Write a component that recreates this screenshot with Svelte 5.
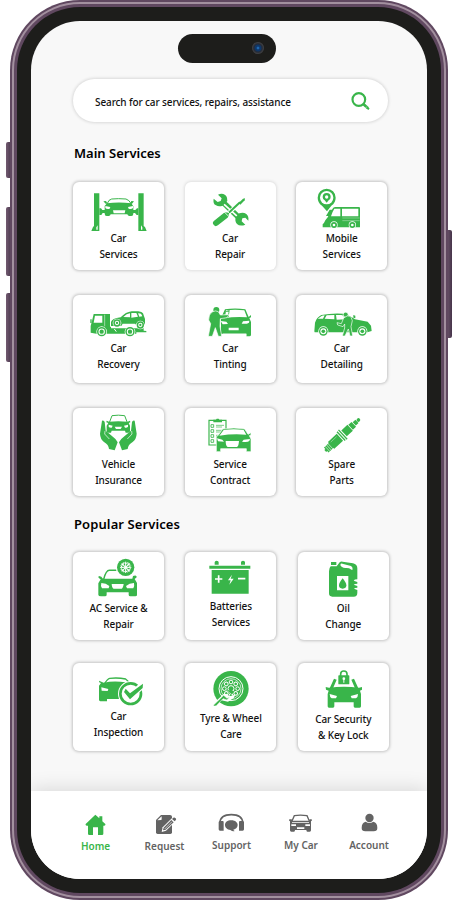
<script>
  const navLabels = ['Home', 'Request', 'Support', 'My Car', 'Account'];
</script>

{#snippet carLift()}
  <path d="M87 54h16v113H79l5-12 3-3zM220 54h16v98l4 3 5 12h-25z" />
  <path d="M94 163v-7l4-6v13zM228 163v-13l4 6v7z" fill="#fff" />
  <path d="M103 99h5l4 5h10v9h-9l-4 6h-6zM220 99h-4l-5 5h-9v9h8l5 6h5z" />
  <path d="M126 86q5-14 14-15 20-2 43 0 9 2 16 15" fill="none" stroke="#39b54a" stroke-width="3" />
  <path d="M115 78l8-1 4 7-5 1zM207 78l-8-1-3 7 5 1zM126 84q35-5 73 0l6 9v22q0 7-6 7h-7q-4-1-5-5h-50q-1 5-6 5h-6q-6 0-6-7V92z" />
  <path d="M121 92l15 3-2 5q-9 2-13-2zM204 92l-15 3 2 5q9 2 13-2zM144 105h37l-2 9h-33z" fill="#fff" />
{/snippet}

{#snippet tools()}
  <path d="M470 78L525 131" stroke="#39b54a" stroke-width="17" />
  <path d="M473 84l47 43" stroke="#fff" stroke-width="5" />
  <path d="M458 58l11 11-3 8-9 3-12-10q-3 15 7 20 8 5 20 1l14-14q1-17-12-21-8-2-16 2zM540 148l-11-10 2-9 9-2 9 9q2-13-6-20-9-6-21-2l-10 10q-5 13 3 22 9 8 25 2z" />
  <path d="M484 118L533 74" stroke="#fff" stroke-width="12" />
  <path d="M484 118L524 81" stroke="#39b54a" stroke-width="6" />
  <path d="M520 83l13-13 6-1-1 6-13 13z" />
  <path d="M452 143l29-23" stroke="#39b54a" stroke-width="18" stroke-linecap="round" />
  <path d="M477 110l18 18M483 105l16 16" stroke="#fff" stroke-width="2.5" />
{/snippet}

{#snippet van()}
  <path d="M306 40a27 27 0 0 0-27 27q0 15 13 24l15 17 13-17q13-9 13-24a27 27 0 0 0-27-27z" />
  <circle cx="306" cy="67" r="20" fill="#fff" />
  <path d="M306 53a12 12 0 0 0-12 12q0 7 6 10l6 7 6-7q6-3 6-10a12 12 0 0 0-12-12z" />
  <circle cx="306" cy="65" r="5" fill="#fff" />
  <path d="M322 103q3-8 9-8h72q3 0 3 4v57H294v-9q5-4 8-12 8-7 13-22z" />
  <path d="M329 100h18v23h-28q4-14 10-23zM352 100h49v23h-49z" fill="#fff" />
  <path d="M315 103h8l-9 19h-10z" fill="#39b54a" />
  <path d="M353 128h52M353 136h52" stroke="#fff" stroke-width="1.5" opacity=".7" />
  <circle cx="328" cy="149" r="11" fill="#fff" /><circle cx="383" cy="149" r="11" fill="#fff" />
  <circle cx="328" cy="149" r="9" /><circle cx="383" cy="149" r="9" />
  <circle cx="328" cy="149" r="4" fill="#fff" /><circle cx="383" cy="149" r="4" fill="#fff" />
{/snippet}

{#snippet towTruck()}
  <path d="M86 80h34v38h18v5h98v7l8 1v4h-30v4H94l-17-3v-20l4-15z" />
  <path d="M90 85h22v21H86z" fill="#fff" />
  <path d="M76 96h4v11h-4z" />
  <path d="M119 80h16v39h-16z" />
  <path d="M119 82v35" stroke="#fff" stroke-width="1.5" />
  <path d="M138 117h101v4H138z" fill="#fff" />
  <path d="M138 104q2-10 29-14 15-16 33-18h20q11 1 14 6l6 17v15l-5 5-20-1-5-5h-37l-4 7h-31z" />
  <path d="M175 89q10-10 20-11v12zM199 77h15l5 11-20 3zM219 78q9 0 10 3l3 6-9 1z" fill="#fff" />
  <path d="M148 125l6 8" stroke="#fff" stroke-width="3" />
  {#each [[156, 107, 11], [226, 113, 11], [110, 133, 14], [195, 133, 14]] as [x, y, r]}
    <circle cx={x} cy={y} r={r + 2} fill="#fff" />
    <circle cx={x} cy={y} {r} />
    <circle cx={x} cy={y} r={r - 4.5} fill="#fff" />
    <circle cx={x} cy={y} r={r - 7.5} />
  {/each}
{/snippet}

{#snippet tinting()}
  <path d="M467 92l12-26q30-5 61 0l10 23 7-6v7l-5 2 5 12v38q0 5-5 5h-9v-8h-76v-42z" />
  <path d="M482 69q27-4 55 0l8 21q-33-3-70 3z" fill="#fff" />
  <path d="M480 72l13-4-3 21-12 2z" />
  <path d="M482 73h8l-2 11-9 3z" fill="#fff" />
  <path d="M552 100l-19 2-4 7q15 2 22-3zM490 121h30v8h-30zM466 101l17 2 5 7-16 1z" fill="#fff" />
  <path d="M473 139h70v8h-70z" fill="#fff" />
  <circle cx="453" cy="68" r="11" fill="#fff" /><circle cx="453" cy="68" r="9" />
  <path d="M440 74q-10 7-10 24l6 11-7 38h12l9-26 9 26h10l-5-30 1-23 20-3 6-9-26 1-6-10q-8-5-19 1z" stroke="#fff" stroke-width="2" />
{/snippet}

{#snippet detailing()}
  <path d="M269 132l2-26q4-15 19-23 30-6 64-4 18 3 37 17l38 7 10 12 2 16-13 4H270z" />
  <path d="M279 94l13-9 8-1-5 10zM300 94l6-10 23-1v13zM334 83h16q15 3 25 12l-39 2z" fill="#fff" />
  <path d="M386 91v-8l6 2v8z" />
  <circle cx="363" cy="82" r="7.500" stroke="#fff" stroke-width="2" />
  <path d="M357 92l-7 17-13-3 2 7 16 5 5-8v12l-7 24h8l10-21 5 21h8l-5-28 4-18-5-13q-10-5-21 5z" stroke="#fff" stroke-width="2" />
  {#each [296, 413] as x}
    <circle cx={x} cy="132" r="15" fill="#fff" /><circle cx={x} cy="132" r="13" />
    <circle cx={x} cy="132" r="9" fill="#fff" /><circle cx={x} cy="132" r="5.500" />
  {/each}
{/snippet}

{#snippet hand()}
  <path d="M111 61q6-2 8 4l3 26 18 15q13 9 18 20l-9 24-17-4q-1-13-15-21-11-8-12-25z" />
  <path d="M120 92l-1 9 14 15" fill="none" stroke="#fff" stroke-width="2" />
{/snippet}

{#snippet insurance()}
  {@render hand()}
  <g transform="translate(320 0) scale(-1 1)">{@render hand()}</g>
  <path d="M133 67l8-21q19-3 38 0l8 21" fill="none" stroke="#39b54a" stroke-width="3" />
  <path d="M132 64q28-3 56 0l7-3 1 5-5 2 4 8v17q0 4-5 4h-8l-2-6h-40l-2 6h-8q-5 0-5-4V76l5-8-6-2 1-5z" />
  <path d="M131 73l12 3-3 6q-6 1-9-3zM189 73l-12 3 3 6q6 1 9-3zM149 79h22l-4 7h-14z" fill="#fff" />
{/snippet}

{#snippet contract()}
  <path d="M431 60h51v74h-51z" fill="#fff" stroke="#39b54a" stroke-width="3.500" />
  <path d="M444 58h8l2-3h6l2 3h8v8h-26z" />
  {#each [73, 88, 103, 118] as y}
    <path d="M437 {y}h8v8h-8z" fill="none" stroke="#39b54a" stroke-width="2.500" />
    <path d="M452 {y + 2}h24m-24 5h18" stroke="#39b54a" stroke-width="2" />
  {/each}
  <path d="M458 106l14-20q34-6 66 0l10 16 9-5v7l-5 2 5 10v38h-14v-9h-77v9h-13v-46z" stroke="#fff" stroke-width="2" />
  <path d="M475 89q30-5 60 0l8 14q-39-4-81 3z" fill="#fff" />
  <path d="M455 114l16 4 5 6-18-1zM554 116l-19 2-5 6q17 2 22-2zM481 122h40q-1 16-6 18h-28q-6-3-6-18z" fill="#fff" />
{/snippet}

{#snippet sparkPlug()}
  <g transform="translate(353 104) rotate(-43)">
    <path d="M-70-4h4v-6h20v-4h36v28h-36v4-8h-20v-6h-4zM-7-18h4v36h-4zM0-19h4v38H0zM7-12h25v24H7zM34-10h13v20H34zM49-7h11v14H49z" />
    <circle cx="66" cy="0" r="5.500" />
    <path d="M-61-11v22M-55-11v22M-49-11v22" stroke="#fff" stroke-width="1.700" />
    <path d="M-40-8h24" stroke="#fff" stroke-width="1" />
  </g>
{/snippet}

{#snippet acCar()}
  <path d="M116 104q7-27 17-27h23" fill="none" stroke="#39b54a" stroke-width="4.500" />
  <path d="M102 94q8 0 12 8h88l2-8q12-4 11 4l-6 5 7 12v36q0 4-5 4h-15q-5 0-5-5v-7h-66v7q0 5-5 5h-12q-8 0-8-5v-34l7-12-6-4q-2-5 1-6z" />
  <path d="M109 115q14 0 24 9l-2 7h-20q-5-7-2-16zM207 115q-14 0-24 9l3 7h19q4-7 2-16zM140 118h36q-2 13-6 14h-24q-5-1-6-14z" fill="#fff" />
  <circle cx="182" cy="68" r="30" fill="#fff" /><circle cx="182" cy="68" r="26" />
  {#each [0, 45, 90, 135] as a}
    <path transform="rotate({a} 182 68)" d="M182 51v34m-5-32l5 5 5-5m-10 30l5-5 5 5" fill="none" stroke="#fff" stroke-width="3" />
  {/each}
{/snippet}

{#snippet battery()}
  <path d="M450 60v-7q0-5 6-5t6 5v7zM529 60v-7q0-5 6-5t6 5v7zM434 63h123v9H434zM441 76h111v71H441z" />
  <path d="M451 103h22m-11-11v22M520 102h22" stroke="#fff" stroke-width="5" />
  <path d="M502 90l-12 17h8l-4 13 13-18h-9z" fill="#fff" />
{/snippet}

{#snippet oilCan()}
  <path d="M316 52h16v9h-16zM315 65h18l9-12q3-3 9-2l31 5q13 3 13 15v33q-9 0-11 4l11 4v5q-8 0-11 3l11 4v5q-8 0-10 3l10 4v8q0 12-11 12h-64q-10 0-10-10V80q0-10 5-15z" />
  <path d="M344 61q1-5 6-4l26 7q5 3 5 10-1 3-6 0-4-5-16-4-12-1-15-9zM334 94h34v43h-34z" fill="#fff" />
  <path d="M351 101q-11 13-11 21a11 10 0 0 0 22 0q0-8-11-21z" />
{/snippet}

{#snippet inspection()}
  <path d="M117 417q11-17 17-18 25-3 48 2l12 11" fill="none" stroke="#39b54a" stroke-width="4" />
  <path d="M102 406l14 6q30-6 66-1v50h-56v7h-20q-4-1-4-5v-42l6-8q-6 0-6-5z" />
  <path d="M109 426l21 5-2 6-18-1z" fill="#fff" />
  <circle cx="197" cy="445" r="38" fill="#fff" />
  <circle cx="197" cy="445" r="31" fill="#fff" stroke="#39b54a" stroke-width="8" />
  <path d="M185 442l10 12 40-37" fill="none" stroke="#fff" stroke-width="20" />
  <path d="M182 430l13 14 39-29-1 13-38 34-18-22z" />
{/snippet}

{#snippet tyre()}
  <circle cx="499" cy="430" r="53" />
  <circle cx="499" cy="430" r="36" fill="none" stroke="#fff" stroke-width="3" />
  <circle cx="499" cy="430" r="30" fill="none" stroke="#fff" stroke-width="2" />
  {#each [0, 45, 90, 135, 180, 225, 270, 315] as a}
    <circle transform="rotate({a} 499 430)" cx="499" cy="410" r="5.500" fill="none" stroke="#fff" stroke-width="3" />
  {/each}
  <circle cx="499" cy="430" r="9" fill="none" stroke="#fff" stroke-width="3" />
  <path d="M442 478l35-32 8-1 9 8 18-5-5 10-17 11-20-4-20 18z" fill="#fff" />
  <path d="M446 480l31-30 10 9 8-4-8 9-12-4-20 21q-7 3-9-1zM484 433l16 14 7-2 2-7" stroke="#fff" stroke-width="1.500" />
{/snippet}

{#snippet security()}
  <path d="M312 429l13-29 8 3-11 26zM398 429l-13-29-8 3 11 26z" />
  <path d="M300 425l10 2q45-5 90 0l9-2v8l-6 3 3 10v37q0 4-4 4h-14q-4 0-4-4v-12h-58v12q0 4-4 4h-12q-4 0-4-4v-37l3-10-8-3z" />
  <path d="M312 446l22 6-3 7h-13q-6-3-6-13zM397 446l-22 6 3 7h13q6-3 6-13z" fill="#fff" />
  <path d="M345 393v-7q0-9 9.500-9t9.500 9v7" fill="none" stroke="#39b54a" stroke-width="5" />
  <rect x="338" y="390" width="33" height="27" rx="2" />
  <circle cx="354.500" cy="400" r="4" fill="#fff" /><path d="M353 401h3v11h-3z" fill="#fff" />
{/snippet}

{#snippet card(icon, origin, gap, first, second, light = false)}
  <div class="card" class:light>
    <svg viewBox="{origin} 270 132" width="90" height="44">{@render icon()}</svg>
    <div class="label" style:margin-top="{gap}px">{first}<br />{second}</div>
  </div>
{/snippet}

<div class="stage">
  <i class="key k1"></i><i class="key k2"></i><i class="key k3"></i><i class="key k4"></i>
  <div class="phone">
    <div class="metal">
      <div class="rim">
        <div class="bezel">
          <div class="screen">
            <div class="island"><span class="lens"></span></div>
            <main>
              <div class="search">
                <span>Search for car services, repairs, assistance</span>
                <svg viewBox="365 270 57 60" width="19" height="20">
                  <circle cx="388.500" cy="295.500" r="19" fill="none" stroke="#39b54a" stroke-width="6.500" />
                  <path d="M401 308l15 14" stroke="#39b54a" stroke-width="8" />
                  <path d="M414 321l5 4" stroke="#39b54a" stroke-width="6" />
                  <path d="M412 317l-3 4" stroke="#fff" stroke-width="1.500" />
                </svg>
              </div>
              <h2>Main Services</h2>
              <section class="grid">
                {@render card(carLift, '24 20', 4, 'Car', 'Services')}
                {@render card(tools, '359 20', 4, 'Car', 'Repair', true)}
                {@render card(van, '214 20', 4, 'Mobile', 'Services')}
                {@render card(towTruck, '24 23', 1, 'Car', 'Recovery')}
                {@render card(tinting, '359 23', 1, 'Car', 'Tinting')}
                {@render card(detailing, '214 23', 1, 'Car', 'Detailing')}
                {@render card(insurance, '24 23', 4, 'Vehicle', 'Insurance')}
                {@render card(contract, '359 23', 4, 'Service', 'Contract')}
                {@render card(sparkPlug, '214 23', 4, 'Spare', 'Parts')}
              </section>
              <h2 class="popular">Popular Services</h2>
              <section class="grid second">
                {@render card(acCar, '24 22', 4, 'AC Service &', 'Repair')}
                {@render card(battery, '361 22', 2, 'Batteries', 'Services')}
                {@render card(oilCan, '217 22', 4, 'Oil', 'Change')}
                {@render card(inspection, '24 353', 1, 'Car', 'Inspection')}
                {@render card(tyre, '361 353', 3, 'Tyre & Wheel', 'Care')}
                {@render card(security, '217 353', 4, 'Car Security', '& Key Lock')}
              </section>
            </main>
            <nav>
              <div class="item active">
                <svg viewBox="252 93 69 78" width="23" height="26">
                  <path d="M286 104l12 11v-6h9v15l9 8q2 4-3 5h-3v24q0 4-4 4h-12v-23h-15v23h-11q-4 0-4-4v-24h-4q-5-1-3-5z" />
                </svg>
                <span>{navLabels[0]}</span>
              </div>
              <div class="item low">
                <svg viewBox="459 93 69 78" width="23" height="26" overflow="visible">
                  <path d="M483 105h27q6 0 6 5v47q0 5-5 5h-38q-5 0-5-5v-37z" />
                  <path d="M472 121l11-1q2 0 2-2v-9z" fill="#fff" />
                  <path d="M485 156l3-14 29-29 11 10-30 29z" fill="#fff" />
                  <path d="M489 151l2-8 23-23 7 7-24 22z" /><path d="M494 147l22-22" stroke="#fff" stroke-width="2" />
                  <path d="M516 117l4-4q4-2 7 2 3 3 0 6l-3 3z" />
                </svg>
                <span>{navLabels[1]}</span>
              </div>
              <div class="item">
                <svg viewBox="656 93 78 78" width="26" height="26">
                  <path d="M659 128q1-24 34-24 33 0 34 24" fill="none" stroke="#636363" stroke-width="5" />
                  <path d="M655 127q0-4 5-4h7q3 0 3 3v26h-11q-4 0-4-4zM731 127q0-4-5-4h-7q-3 0-3 3v26h11q4 0 4-4z" />
                  <path d="M693 121c-12 0-19 6-19 14s7 14 16 15q7 5 13 3-3-1-4-4c8-2 13-7 13-14s-7-14-19-14z" />
                </svg>
                <span>{navLabels[2]}</span>
              </div>
              <div class="item">
                <svg viewBox="182 93 69 78" width="23" height="26">
                  <path d="M188 123l7-16q18-3 38 0l7 16" fill="none" stroke="#636363" stroke-width="4" />
                  <path d="M180 118h7l2 4h50l2-4h6q3 4-2 6v27q0 4-4 4h-7q-3 0-3-5h-34q0 5-3 5h-8q-4 0-4-4v-27q-5-2-2-6z" />
                  <path d="M186 133h14v5h-14zM228 133h14v5h-14zM203 142h22v5h-22zM188 127h51v2h-51z" fill="#fff" />
                </svg>
                <span>{navLabels[3]}</span>
              </div>
              <div class="item">
                <svg viewBox="388 93 69 78" width="23" height="26">
                  <circle cx="422.500" cy="114" r="12.500" />
                  <path d="M411 125q11 8 23 0 12 2 12 19 0 10-11 10h-25q-11 0-11-10 0-17 12-19z" />
                </svg>
                <span>{navLabels[4]}</span>
              </div>
            </nav>
          </div>
        </div>
      </div>
    </div>
  </div>
</div>

<style>
  :global(body) { background: #fff; }
  .stage {
    position: relative;
    width: 458px;
    height: 910px;
    box-sizing: border-box;
    padding-left: 10px;
    overflow: hidden;
    font-family: "Noto Sans", "Open Sans", sans-serif;
    color: #111;
  }
  .phone, .metal, .rim, .bezel, .screen { box-sizing: border-box; }
  .phone { width: 438px; height: 900px; padding: 2px; border-radius: 70px; background: #604860; position: relative; }
  .metal { height: 100%; padding: 2px; border-radius: 68px; background: #a3909f; }
  .rim { height: 100%; padding: 3px; border-radius: 66px; background: #604860; }
  .bezel { height: 100%; padding: 14px; border-radius: 63px; background: #1d1d1b; }
  .screen {
    height: 100%;
    border-radius: 49px;
    background: #f8f8f8;
    overflow: hidden;
    display: flex;
    flex-direction: column;
  }
  .key { position: absolute; width: 6px; background: linear-gradient(90deg, #725a70, #46344a); border-radius: 2px; left: 6px; }
  .k1 { top: 142px; height: 36px; }
  .k2 { top: 207px; height: 69px; }
  .k3 { top: 293px; height: 69px; }
  .k4 { left: 446px; top: 230px; height: 108px; }
  .island {
    box-sizing: border-box;
    width: 98px;
    height: 29px;
    margin: 13px 0 0 147px;
    padding: 8px 12px;
    border-radius: 15px;
    background: #1d1d1b;
    display: flex;
    justify-content: flex-end;
    flex: none;
  }
  .lens { width: 12px; height: 12px; border-radius: 50%; background: radial-gradient(circle, #2068b0 0 8%, #0e3668 22% 34%, #252a35 48%, #454548 70%); }
  main { flex: 1; padding: 16px 0 0 42px; }
  .search {
    box-sizing: border-box;
    width: 315px;
    height: 43px;
    border-radius: 22px;
    background: #fff;
    box-shadow: 0 0 3px 1px rgba(0, 0, 0, 0.12);
    display: flex;
    align-items: center;
    justify-content: space-between;
    padding: 1px 18px 0 22px;
    font-size: 10px;
    font-weight: 500;
    letter-spacing: -0.11px;
    white-space: nowrap;
  }
  .search span { padding-top: 1px; }
  h2 { margin: 20px 0 0 1px; font-size: 13px; line-height: 22px; font-weight: 600; color: #000; }
  h2.popular { margin-top: 17px; letter-spacing: 0.1px; }
  .grid { display: grid; grid-template-columns: repeat(3, 91px); gap: 25px 20.600px; margin-top: 18px; }
  .grid.second { margin-top: 17px; column-gap: 21.400px; row-gap: 23px; }
  .card { height: 88px; border-radius: 6px; background: #fff; box-shadow: 0 0 3px 1px rgba(0, 0, 0, 0.21); }
  .card.light { box-shadow: 0 0 3px 1px rgba(0, 0, 0, 0.1); }
  svg { display: block; fill: #39b54a; overflow: visible; flex: none; }
  .label { text-align: center; font-size: 10px; line-height: 16px; font-weight: 500; letter-spacing: -0.1px; white-space: nowrap; }
  nav {
    box-sizing: border-box;
    height: 88px;
    flex: none;
    padding: 20px 0 0 30px;
    background: #fff;
    box-shadow: 0 -2px 18px rgba(0, 0, 0, 0.13);
    display: flex;
    color: #636363;
  }
  .item { width: 69px; display: flex; flex-direction: column; align-items: center; font-size: 10px; line-height: 16px; font-weight: 600; }
  .item:nth-child(3) { width: 65px; }
  .item:nth-child(4) { width: 74px; }
  .item:nth-child(5) { width: 62px; }
  .item svg { fill: #636363; }
  .item.active { color: #39b54a; }
  .item.active svg { fill: #39b54a; }
  .active span, .low span { padding-top: 1px; }
</style>
